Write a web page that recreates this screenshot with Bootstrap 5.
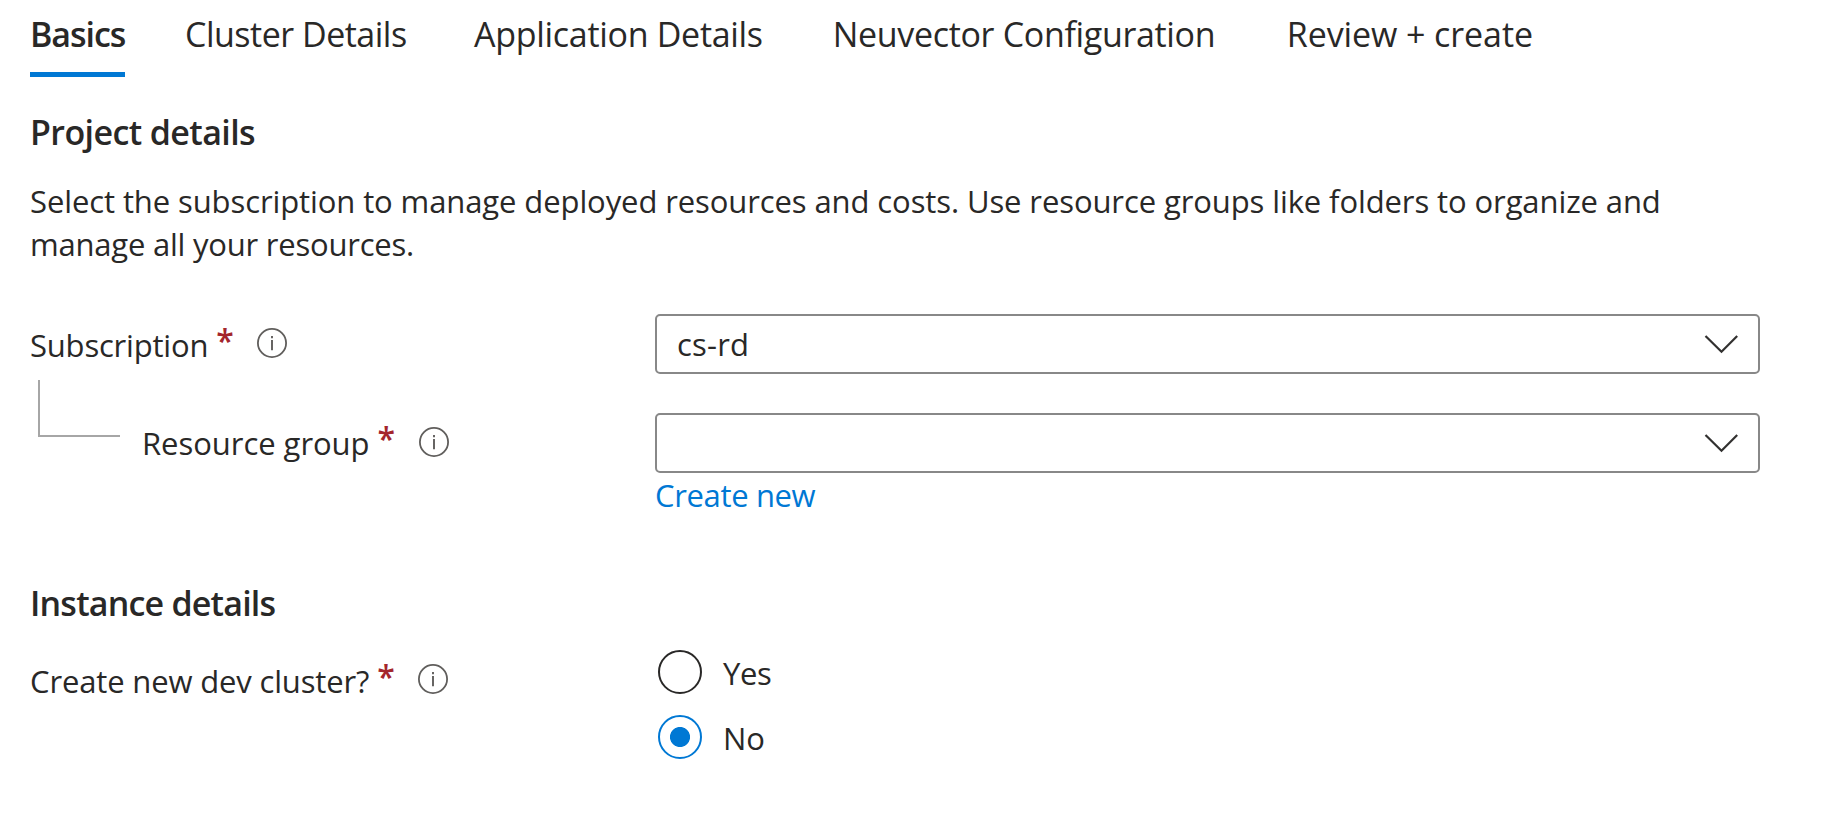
<!DOCTYPE html>
<html lang="en">
<head>
<meta charset="utf-8">
<meta name="viewport" content="width=device-width, initial-scale=1">
<title>Basics</title>
<link rel="stylesheet" href="https://cdn.jsdelivr.net/npm/bootstrap@5.3.0/dist/css/bootstrap.min.css">
<style>
  body { font-family: "Open Sans", "Noto Sans", sans-serif; font-size: 31px; line-height: 42px; color: #292827; background: #fff; overflow: hidden; }
  .page { padding: 11px 0 0 30px; }
  .tabs { font-size: 34px; line-height: 46px; }
  .tabs .nav-link { color: inherit; padding: 0 0 15px; white-space: nowrap; }
  .tabs .active { width: 95px; font-weight: 600; letter-spacing: -1.05px; border-bottom: 5px solid #0078d4; }
  .t-cluster { margin-left: 60px; letter-spacing: -.5px; }
  .t-app { margin-left: 67.4px; letter-spacing: -.3px; }
  .t-neu { margin-left: 70px; letter-spacing: -.33px; }
  .t-review { margin-left: 71.6px; letter-spacing: -.1px; }
  .heading { font-size: 34px; line-height: 46px; font-weight: 600; margin: 0; }
  .h-project { margin-top: 32px; letter-spacing: -.6px; }
  .h-instance { margin-top: 64px; letter-spacing: -.8px; }
  .intro { margin: 25px 0 0; line-height: 43px; white-space: nowrap; }
  .intro-1 { letter-spacing: -.1px; }
  .intro-2 { letter-spacing: -.22px; }
  .form-row { margin-top: 39px; }
  .row-first { margin-top: 48px; }
  .row-choice { margin-top: 24px; }
  .label-col { width: 625px; flex: none; }
  .label-text { padding-top: 10px; }
  .label-nested { padding-top: 9px; margin-left: -2px; }
  .field-col { width: 1105px; flex: none; }
  .star { color: #a4262c; font-weight: 600; font-size: 32px; margin: -4px 0 4px 8px; width: 19px; }
  .info { width: 30px; height: 30px; display: block; margin: 4px 0 0 22px; }
  .pick { height: 60px; border: 2px solid #888; border-radius: 5px; padding: 0 20px; }
  .pick svg { width: 34px; height: 20px; display: block; }
  .connector { width: 82px; height: 57px; margin: -33px 24px 0 8px; border-left: 2px solid #a6a6a6; border-bottom: 2px solid #a6a6a6; }
  .create { color: #0078d4; letter-spacing: -.35px; display: inline-block; margin-top: 1px; text-decoration: none; }
  .choices { gap: 21px; padding-left: 3px; }
  .choice-line { height: 44px; gap: 21px; }
  .choice-line label { padding-top: 2px; }
  .form-check-input.choice { width: 44px; height: 44px; margin: 0; border: 2px solid #292827; background: #fff; box-shadow: none; }
  .form-check-input.choice:checked { border-color: #0078d4; background: radial-gradient(circle, #0078d4 9.6px, #fff 10.4px); }
</style>
</head>
<body>
<svg width="0" height="0" class="d-none">
  <symbol id="info" viewBox="0 0 30 30"><circle cx="15" cy="15" r="14.1" fill="none" stroke="#605e5c" stroke-width="1.8"/><path d="M15 12v10.300M15 8v2.200" stroke="#605e5c" stroke-width="1.900"/></symbol>
  <symbol id="chevron" viewBox="0 0 34 20"><path d="M1.500 2 17.500 17.800 33.200 2" fill="none" stroke="#323130" stroke-width="2.200"/></symbol>
</svg>
<main class="page">
  <nav class="nav tabs flex-nowrap">
    <a class="nav-link active" href="#">Basics</a>
    <a class="nav-link t-cluster" href="#">Cluster Details</a>
    <a class="nav-link t-app" href="#">Application Details</a>
    <a class="nav-link t-neu" href="#">Neuvector Configuration</a>
    <a class="nav-link t-review" href="#">Review + create</a>
  </nav>

  <h2 class="heading h-project">Project details</h2>
  <p class="intro"><span class="intro-1">Select the subscription to manage deployed resources and costs. Use resource groups like folders to organize and</span><br><span class="intro-2">manage all your resources.</span></p>

  <div class="form-row row-first d-flex">
    <div class="label-col label-text d-flex align-items-start">
      <label style="letter-spacing:-.2px">Subscription</label><span class="star">*</span>
      <svg class="info"><use href="#info"/></svg>
    </div>
    <div class="field-col pick d-flex align-items-center justify-content-between">
      <span style="letter-spacing:.2px">cs-rd</span>
      <svg><use href="#chevron"/></svg>
    </div>
  </div>

  <div class="form-row d-flex">
    <div class="label-col d-flex align-items-start">
      <div class="connector"></div>
      <div class="label-nested d-flex align-items-start">
        <label style="letter-spacing:-.04px">Resource group</label><span class="star">*</span>
        <svg class="info" style="margin-top:5px"><use href="#info"/></svg>
      </div>
    </div>
    <div class="field-col">
      <div class="pick d-flex align-items-center justify-content-end">
        <svg><use href="#chevron"/></svg>
      </div>
      <a class="create" href="#">Create new</a>
    </div>
  </div>

  <h2 class="heading h-instance">Instance details</h2>
  <div class="form-row row-choice d-flex">
    <div class="label-col label-text d-flex align-items-start">
      <label style="letter-spacing:-.15px">Create new dev cluster?</label><span class="star">*</span>
      <svg class="info"><use href="#info"/></svg>
    </div>
    <div class="field-col choices d-flex flex-column">
      <div class="choice-line d-flex">
        <input class="form-check-input choice" type="radio" name="dev" id="yes"><label for="yes" style="letter-spacing:-.4px">Yes</label>
      </div>
      <div class="choice-line d-flex">
        <input class="form-check-input choice" type="radio" name="dev" id="no" checked><label for="no">No</label>
      </div>
    </div>
  </div>
</main>
<script src="https://cdn.jsdelivr.net/npm/bootstrap@5.3.0/dist/js/bootstrap.bundle.min.js"></script>
</body>
</html>
